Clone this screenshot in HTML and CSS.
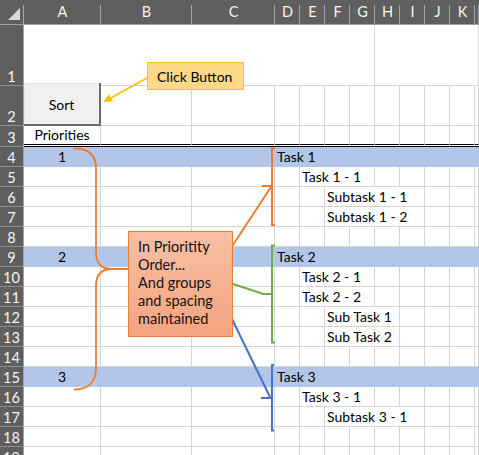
FILE: index.html
```html
<!DOCTYPE html>
<html lang="en">
<head>
  <meta charset="UTF-8">
  <meta name="viewport" content="width=device-width, initial-scale=1.0">
  <title>Priorities</title>
  <link rel="stylesheet" href="styles.css">
</head>
<body>
  <div class="sheet">
    <div class="row head">
      <div class="corner">
        <svg width="24" height="24" viewBox="0 0 24 24"><polygon points="20,8 20,20 8,20" fill="#dadada"/></svg>
      </div>
      <div class="colh">A</div><div class="colh">B</div><div class="colh">C</div><div class="colh">D</div>
      <div class="colh">E</div><div class="colh">F</div><div class="colh">G</div><div class="colh">H</div>
      <div class="colh">I</div><div class="colh">J</div><div class="colh">K</div><div class="colh"></div>
    </div>

    <div class="row r1">
      <div class="rh">1</div>
      <div class="c a-g"></div><div class="c h-l"></div>
    </div>

    <div class="row r2">
      <div class="rh">2</div>
      <div class="c"></div><div class="c"></div><div class="c"></div><div class="c"></div><div class="c"></div><div class="c"></div>
      <div class="c"></div><div class="c"></div><div class="c"></div><div class="c"></div><div class="c"></div><div class="c"></div>
    </div>

    <div class="row r3">
      <div class="rh">3</div>
      <div class="c ctr">Priorities</div><div class="c"></div><div class="c"></div><div class="c"></div><div class="c"></div><div class="c"></div>
      <div class="c"></div><div class="c"></div><div class="c"></div><div class="c"></div><div class="c"></div><div class="c"></div>
    </div>

    <div class="row band">
      <div class="rh">4</div>
      <div class="c ctr">1</div><div class="c"></div><div class="c"></div><div class="c w2">Task 1</div>
      <div class="c"></div><div class="c"></div><div class="c"></div><div class="c"></div><div class="c"></div><div class="c"></div><div class="c"></div>
    </div>
    <div class="row">
      <div class="rh">5</div>
      <div class="c"></div><div class="c"></div><div class="c"></div><div class="c"></div><div class="c w3">Task 1 - 1</div>
      <div class="c"></div><div class="c"></div><div class="c"></div><div class="c"></div><div class="c"></div>
    </div>
    <div class="row">
      <div class="rh">6</div>
      <div class="c"></div><div class="c"></div><div class="c"></div><div class="c"></div><div class="c"></div><div class="c w4">Subtask 1 - 1</div>
      <div class="c"></div><div class="c"></div><div class="c"></div>
    </div>
    <div class="row">
      <div class="rh">7</div>
      <div class="c"></div><div class="c"></div><div class="c"></div><div class="c"></div><div class="c"></div><div class="c w4">Subtask 1 - 2</div>
      <div class="c"></div><div class="c"></div><div class="c"></div>
    </div>
    <div class="row">
      <div class="rh">8</div>
      <div class="c"></div><div class="c"></div><div class="c"></div><div class="c"></div><div class="c"></div><div class="c"></div>
      <div class="c"></div><div class="c"></div><div class="c"></div><div class="c"></div><div class="c"></div><div class="c"></div>
    </div>

    <div class="row band">
      <div class="rh">9</div>
      <div class="c ctr">2</div><div class="c"></div><div class="c"></div><div class="c w2">Task 2</div>
      <div class="c"></div><div class="c"></div><div class="c"></div><div class="c"></div><div class="c"></div><div class="c"></div><div class="c"></div>
    </div>
    <div class="row">
      <div class="rh">10</div>
      <div class="c"></div><div class="c"></div><div class="c"></div><div class="c"></div><div class="c w3">Task 2 - 1</div>
      <div class="c"></div><div class="c"></div><div class="c"></div><div class="c"></div><div class="c"></div>
    </div>
    <div class="row">
      <div class="rh">11</div>
      <div class="c"></div><div class="c"></div><div class="c"></div><div class="c"></div><div class="c w3">Task 2 - 2</div>
      <div class="c"></div><div class="c"></div><div class="c"></div><div class="c"></div><div class="c"></div>
    </div>
    <div class="row">
      <div class="rh">12</div>
      <div class="c"></div><div class="c"></div><div class="c"></div><div class="c"></div><div class="c"></div><div class="c w3">Sub Task 1</div>
      <div class="c"></div><div class="c"></div><div class="c"></div><div class="c"></div>
    </div>
    <div class="row">
      <div class="rh">13</div>
      <div class="c"></div><div class="c"></div><div class="c"></div><div class="c"></div><div class="c"></div><div class="c w3">Sub Task 2</div>
      <div class="c"></div><div class="c"></div><div class="c"></div><div class="c"></div>
    </div>
    <div class="row">
      <div class="rh">14</div>
      <div class="c"></div><div class="c"></div><div class="c"></div><div class="c"></div><div class="c"></div><div class="c"></div>
      <div class="c"></div><div class="c"></div><div class="c"></div><div class="c"></div><div class="c"></div><div class="c"></div>
    </div>

    <div class="row band">
      <div class="rh">15</div>
      <div class="c ctr">3</div><div class="c"></div><div class="c"></div><div class="c w2">Task 3</div>
      <div class="c"></div><div class="c"></div><div class="c"></div><div class="c"></div><div class="c"></div><div class="c"></div><div class="c"></div>
    </div>
    <div class="row">
      <div class="rh">16</div>
      <div class="c"></div><div class="c"></div><div class="c"></div><div class="c"></div><div class="c w3">Task 3 - 1</div>
      <div class="c"></div><div class="c"></div><div class="c"></div><div class="c"></div><div class="c"></div>
    </div>
    <div class="row">
      <div class="rh">17</div>
      <div class="c"></div><div class="c"></div><div class="c"></div><div class="c"></div><div class="c"></div><div class="c w4">Subtask 3 - 1</div>
      <div class="c"></div><div class="c"></div><div class="c"></div>
    </div>
    <div class="row">
      <div class="rh">18</div>
      <div class="c"></div><div class="c"></div><div class="c"></div><div class="c"></div><div class="c"></div><div class="c"></div>
      <div class="c"></div><div class="c"></div><div class="c"></div><div class="c"></div><div class="c"></div><div class="c"></div>
    </div>
    <div class="row">
      <div class="rh">19</div>
      <div class="c"></div><div class="c"></div><div class="c"></div><div class="c"></div><div class="c"></div><div class="c"></div>
      <div class="c"></div><div class="c"></div><div class="c"></div><div class="c"></div><div class="c"></div><div class="c"></div>
    </div>

    <!-- drawn shapes on top of the cells -->
    <svg class="shapes" width="479" height="455" viewBox="0 0 479 455">
      <path d="M74 148.5 C88 148.5 96 155 96 168 L96 252 C96 263 101 269 112 269 L128 269 M112 269 C101 269 96 275 96 286 L96 368 C96 382 88 389.5 74 389.5" fill="none" stroke="#ed7d31" stroke-width="1.8"/>
      <path d="M275 148 H272 V225 H275 M262 186 H272 M229 251 L271 187" fill="none" stroke="#ed7d31" stroke-width="2"/>
      <path d="M275 245.5 H272 V342.5 H275 M262 294 H272 M233 284 L262 293.5" fill="none" stroke="#70ad47" stroke-width="2"/>
      <path d="M274 365 H272 V430.5 H274 M261 398 H272 M232 319 L270 397" fill="none" stroke="#4472c4" stroke-width="2"/>
      <line x1="147" y1="78" x2="109" y2="99" stroke="#ffc000" stroke-width="1.8"/>
      <polygon points="103,102.3 112.8,101.2 109,94.2" fill="#ffc000"/>
    </svg>

    <button class="sort-btn">Sort</button>
    <div class="callout">Click Button</div>
    <div class="note">In Prioritity<br>Order...<br>And groups<br>and spacing<br>maintained</div>
  </div>
</body>
</html>
```

FILE: styles.css
```css
body {
  margin: 0;
  background: #fff;
  color: #000;
  font-family: Lato, "Liberation Sans", sans-serif;
  font-size: 14px;
}
.sheet {
  position: relative;
  width: 479px;
  height: 455px;
  overflow: hidden;
}
.row {
  display: grid;
  grid-template-columns: 24px 77px 91px 83px repeat(8, 25px) 1fr;
  height: 20px;
}
.row > div {
  box-sizing: border-box;
}

/* column and row headers */
.head { height: 25px; }
.corner,
.colh {
  background: #5f5f5f linear-gradient(#a3a3a3, #a3a3a3) right bottom / 1px 19px no-repeat;
  border-bottom: 1px solid #a3a3a3;
  color: #f4f4f4;
  font-size: 14.5px;
  line-height: 24px;
  text-align: center;
}
.corner svg { display: block; }
.rh {
  display: flex;
  align-items: flex-end;
  justify-content: center;
  background: #5f5f5f;
  color: #f4f4f4;
  border-right: 1px solid #a3a3a3;
  border-bottom: 1px solid #8e8e8e;
  font-size: 14.5px;
  line-height: 16px;
}

/* cells */
.c {
  border-right: 1px solid #d4d4d4;
  border-bottom: 1px solid #d4d4d4;
  padding: 1px 0 0 2px;
  line-height: 18px;
  white-space: nowrap;
}
.ctr { text-align: center; padding-left: 0; }
.w2 { grid-column: span 2; }
.w3 { grid-column: span 3; }
.w4 { grid-column: span 4; }

.r1 { height: 61px; }
.r1 .a-g { grid-column: 2 / 9; }
.r1 .h-l { grid-column: 9 / 14; }
.r2 { height: 40px; }
.r3 { height: 21px; }
.r3 .c {
  border-bottom: 3px double #000;
  padding-top: 0;
  line-height: 18px;
}
.band .c {
  background: #b4c6e7;
  border-color: #b4c6e7;
}

/* shapes */
.shapes {
  position: absolute;
  top: 0;
  left: 0;
  pointer-events: none;
}
.sort-btn {
  position: absolute;
  left: 24px;
  top: 83px;
  width: 77px;
  height: 43px;
  margin: 0;
  padding: 2px 0 0;
  background: #f0f0f0;
  border: none;
  border-right: 2px solid #6a6a6a;
  border-bottom: 2px solid #6a6a6a;
  box-shadow: inset 1px 1px 0 #e6e6e6;
  font-family: Lato, "Liberation Sans", sans-serif;
  font-size: 14px;
  color: #000;
}
.callout {
  position: absolute;
  left: 147px;
  top: 62px;
  width: 97px;
  height: 28px;
  box-sizing: border-box;
  display: flex;
  align-items: center;
  padding-left: 9px;
  background: #ffd888;
  border: 1px solid #fbbf2c;
}
.note {
  position: absolute;
  left: 128px;
  top: 231px;
  width: 105px;
  height: 106px;
  box-sizing: border-box;
  padding: 6px 0 0 9px;
  background: linear-gradient(#f8c0a5, #f4a47f);
  border: 1px solid #ed7d31;
  font-size: 14.5px;
  line-height: 18px;
  color: #111;
}
```
